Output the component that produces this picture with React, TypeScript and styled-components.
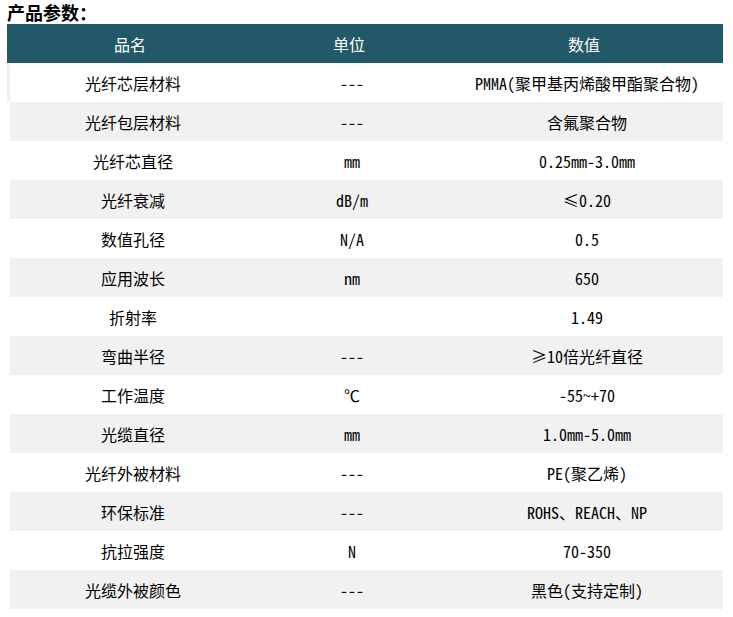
import React from 'react'
import styled, { createGlobalStyle } from 'styled-components'

const GlobalStyle = createGlobalStyle`
  body {
    margin: 0;
    background: #ffffff;
    font-family: "Noto Sans Mono CJK SC", "Noto Sans CJK SC", "Liberation Mono", monospace;
    color: #000000;
    text-spacing-trim: space-all;
  }
`

const Page = styled.div`
  padding: 0 7px;
  width: 733px;
  box-sizing: border-box;
`

const Title = styled.h3`
  margin: 0;
  height: 24px;
  font-size: 18px;
  line-height: 25px;
  font-weight: 700;
`

const Table = styled.div`
  display: flex;
  flex-direction: column;
  width: 716px;
`

const HeadRow = styled.div`
  display: grid;
  grid-template-columns: 246px 192px 278px;
  height: 39px;
  align-items: center;
  background: #225968;
  color: #ffffff;
  font-size: 16px;
`

const Body = styled.div`
  margin-left: 3px;
  display: flex;
  flex-direction: column;
`

const Row = styled.div<{ $striped: boolean; $first?: boolean }>`
  display: grid;
  grid-template-columns: 246px 192px 278px;
  height: 39px;
  align-items: center;
  background: ${({ $striped }) => ($striped ? '#f1f1f1' : '#ffffff')};
  box-shadow: ${({ $first }) => ($first ? '-3px 0 0 #f1f1f1' : 'none')};
  font-size: 16px;
`

const Cell = styled.div`
  text-align: center;
  white-space: nowrap;
  line-height: 38px;
`

const rows: [string, string, string][] = [
  ['光纤芯层材料', '---', 'PMMA(聚甲基丙烯酸甲酯聚合物)'],
  ['光纤包层材料', '---', '含氟聚合物'],
  ['光纤芯直径', 'mm', '0.25mm-3.0mm'],
  ['光纤衰减', 'dB/m', '≤0.20'],
  ['数值孔径', 'N/A', '0.5'],
  ['应用波长', 'nm', '650'],
  ['折射率', '', '1.49'],
  ['弯曲半径', '---', '≥10倍光纤直径'],
  ['工作温度', '℃', '-55~+70'],
  ['光缆直径', 'mm', '1.0mm-5.0mm'],
  ['光纤外被材料', '---', 'PE(聚乙烯)'],
  ['环保标准', '---', 'ROHS、REACH、NP'],
  ['抗拉强度', 'N', '70-350'],
  ['光缆外被颜色', '---', '黑色(支持定制)'],
]

export default function App() {
  return (
    <Page>
      <GlobalStyle />
      <Title>产品参数：</Title>
      <Table>
        <HeadRow>
          <Cell>品名</Cell>
          <Cell>单位</Cell>
          <Cell>数值</Cell>
        </HeadRow>
        <Body>
          {rows.map(([name, unit, value], i) => (
            <Row key={name} $striped={i % 2 === 1} $first={i === 0}>
              <Cell>{name}</Cell>
              <Cell>{unit}</Cell>
              <Cell>{value}</Cell>
            </Row>
          ))}
        </Body>
      </Table>
    </Page>
  )
}
